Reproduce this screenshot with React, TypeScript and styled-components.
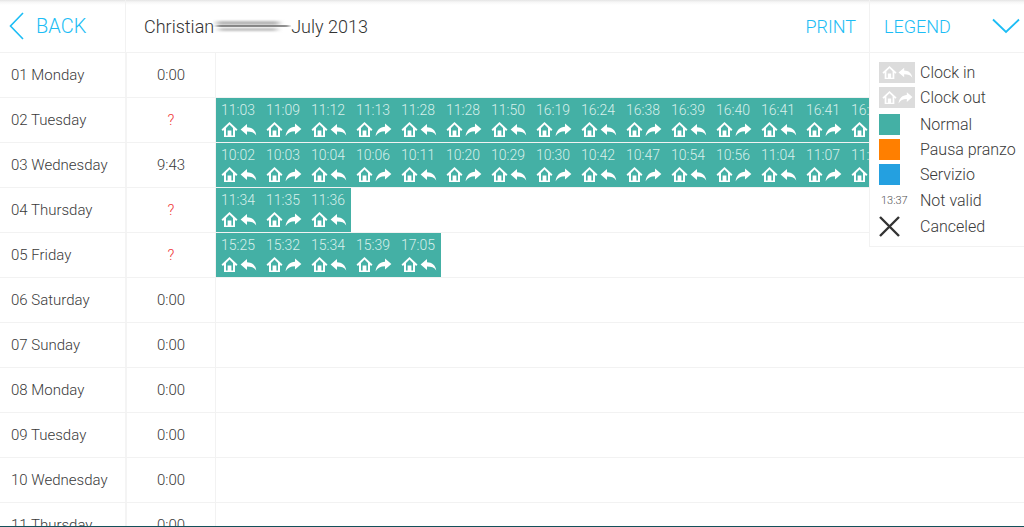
import React from "react";
import styled, { createGlobalStyle } from "styled-components";

const Global = createGlobalStyle`
  html, body { margin: 0; padding: 0; height: 100%; background: #fff; }
  #root { height: 100%; }
  * { box-sizing: border-box; }
`;

const Page = styled.div`
  position: relative;
  width: 100%;
  height: 100vh;
  overflow: hidden;
  display: flex;
  flex-direction: column;
  font-family: Roboto, "Liberation Sans", sans-serif;
  font-weight: 300;
  color: #333;
  border-bottom: 1px solid #14505a;
`;

const Header = styled.header`
  flex: none;
  height: 53px;
  display: flex;
  align-items: stretch;
  border-bottom: 1px solid #f2f2f2;
  background: linear-gradient(#e4e4e4 0, #f6f6f6 2px, #fff 5px);
`;

const BackButton = styled.div`
  flex: none;
  width: 126px;
  display: flex;
  align-items: center;
  padding-left: 9px;
  gap: 12px;
  border-right: 1px solid #f2f2f2;
  color: #1cbdf5;
  font-size: 20px;
`;

const Title = styled.div`
  flex: 1;
  display: flex;
  align-items: center;
  padding-left: 18px;
  font-size: 18px;
  color: #333;
`;

const NameSmear = styled.svg`
  flex: none;
  width: 78px;
  height: 16px;
  margin: 0 0 0 -1px;
`;

const PrintLink = styled.div`
  flex: none;
  width: 100px;
  align-self: center;
  padding-right: 13px;
  text-align: right;
  color: #1cbdf5;
  font-size: 18px;
`;

const LegendToggle = styled.div`
  flex: none;
  width: 155px;
  display: flex;
  align-items: center;
  justify-content: space-between;
  padding: 0 4px 0 14px;
  border-left: 1px solid #f2f2f2;
  color: #1cbdf5;
  font-size: 18px;
`;

const Rows = styled.div`
  flex: 1;
  min-height: 0;
  overflow: hidden;
`;

const Row = styled.div`
  height: 45px;
  display: flex;
  border-bottom: 1px solid #f2f2f2;
`;

const DayCell = styled.div`
  flex: none;
  width: 127px;
  padding-left: 11px;
  display: flex;
  align-items: center;
  font-size: 15px;
  color: #3a3a3a;
  border-right: 2px solid #f4f4f4;
`;

const HoursCell = styled.div<{ $unknown?: boolean }>`
  flex: none;
  width: 89px;
  display: flex;
  align-items: center;
  justify-content: center;
  font-size: 15px;
  color: ${(p) => (p.$unknown ? "#ef3a3a" : "#3a3a3a")};
  border-right: 1px solid #f2f2f2;
`;

const Track = styled.div`
  flex: 1;
  min-width: 0;
  display: flex;
  overflow: hidden;
`;

const Entry = styled.div`
  flex: none;
  width: 45px;
  height: 44px;
  background: #44b0a5;
  padding: 3px 0 0 5px;
  color: #d8efeb;
  font-size: 14px;
  line-height: 18px;
`;

const EntryIcons = styled.div`
  display: flex;
  align-items: center;
  gap: 2px;
  margin-top: 2px;
`;

const LegendPanel = styled.aside`
  position: absolute;
  top: 53px;
  right: 0;
  width: 155px;
  height: 194px;
  padding: 9px 0 0 9px;
  background: #fff;
  border-left: 1px solid #f2f2f2;
  border-bottom: 1px solid #f2f2f2;
`;

const LegendRow = styled.div<{ $h: number }>`
  height: ${(p) => p.$h}px;
  display: flex;
  align-items: center;
  font-size: 16px;
  color: #3a3a3a;
`;

const LegendKey = styled.div`
  flex: none;
  width: 41px;
  display: flex;
  align-items: center;
`;

const IconChip = styled.div`
  width: 36px;
  height: 21px;
  background: #dcdcdc;
  display: flex;
  align-items: center;
  justify-content: center;
  gap: 1px;
`;

const Swatch = styled.div<{ $color: string }>`
  width: 21px;
  height: 21px;
  background: ${(p) => p.$color};
`;

const SmallTime = styled.span`
  font-size: 11px;
  color: #555;
  padding-left: 2px;
`;

const House = ({ size = 17 }: { size?: number }) => (
  <svg width={size} height={size} viewBox="0 0 17 17">
    <path
      d="M8.5 1 L16.5 8.6 L15.2 9.9 L14 8.9 V16 H3 V8.9 L1.8 9.9 L0.5 8.6 Z"
      fill="#fff"
    />
    <path d="M8.5 3.6 L12 7 V14.4 H10.4 V9.6 H6.6 V14.4 H5 V7 Z" fill="#44b0a5" fillOpacity="1" className="hole" />
  </svg>
);

const HouseLight = () => (
  <svg width={15} height={15} viewBox="0 0 17 17">
    <path d="M8.5 1 L16.5 8.6 L15.2 9.9 L14 8.9 V16 H3 V8.9 L1.8 9.9 L0.5 8.6 Z" fill="#fff" />
    <path d="M8.5 3.6 L12 7 V14.4 H10.4 V9.6 H6.6 V14.4 H5 V7 Z" fill="#dcdcdc" />
  </svg>
);

const ArrowIn = ({ size = 17 }: { size?: number }) => (
  <svg width={size} height={size} viewBox="0 0 17 17">
    <path d="M7 3 V6.2 C12 6.4 15.6 9 16.2 14.5 C14.4 11.6 11.4 10.6 7 10.6 V14 L0.6 8.5 Z" fill="#fff" />
  </svg>
);

const ArrowOut = ({ size = 17 }: { size?: number }) => (
  <svg width={size} height={size} viewBox="0 0 17 17">
    <path d="M10 2.6 V5.8 C5 6 1.4 9.4 0.6 15.2 C2.6 11.8 5.6 10.2 10 10.2 V13.6 L16.4 8 Z" fill="#fff" />
  </svg>
);

const days: { day: string; hours: string; times?: string[] }[] = [
  { day: "01 Monday", hours: "0:00" },
  {
    day: "02 Tuesday",
    hours: "?",
    times: ["11:03","11:09","11:12","11:13","11:28","11:28","11:50","16:19","16:24","16:38","16:39","16:40","16:41","16:41","16:51"],
  },
  {
    day: "03 Wednesday",
    hours: "9:43",
    times: ["10:02","10:03","10:04","10:06","10:11","10:20","10:29","10:30","10:42","10:47","10:54","10:56","11:04","11:07","11:20"],
  },
  { day: "04 Thursday", hours: "?", times: ["11:34","11:35","11:36"] },
  { day: "05 Friday", hours: "?", times: ["15:25","15:32","15:34","15:39","17:05"] },
  { day: "06 Saturday", hours: "0:00" },
  { day: "07 Sunday", hours: "0:00" },
  { day: "08 Monday", hours: "0:00" },
  { day: "09 Tuesday", hours: "0:00" },
  { day: "10 Wednesday", hours: "0:00" },
  { day: "11 Thursday", hours: "0:00" },
];

export default function App() {
  return (
    <Page>
      <Global />
      <Header>
        <BackButton>
          <svg width="15" height="28" viewBox="0 0 15 28">
            <path d="M14 1 L1.5 14 L14 27" fill="none" stroke="#1cbdf5" strokeWidth="1.6" />
          </svg>
          <span>BACK</span>
        </BackButton>
        <Title>
          <span>Christian</span>
          <NameSmear viewBox="0 0 78 16">
            <defs>
              <filter id="smear" x="-10%" y="-60%" width="120%" height="220%">
                <feGaussianBlur stdDeviation="3 0.9" />
              </filter>
              <filter id="smearFine" x="-10%" y="-60%" width="120%" height="220%">
                <feGaussianBlur stdDeviation="2 0.4" />
              </filter>
            </defs>
            <rect x="4" y="3" width="62" height="4" fill="#b5b5b5" filter="url(#smear)" />
            <rect x="6" y="10" width="58" height="3" fill="#bdbdbd" filter="url(#smear)" />
            <rect x="4" y="7.4" width="72" height="1.2" fill="#444" filter="url(#smearFine)" />
          </NameSmear>
          <span>July 2013</span>
        </Title>
        <PrintLink>PRINT</PrintLink>
        <LegendToggle>
          <span>LEGEND</span>
          <svg width="28" height="16" viewBox="0 0 28 16">
            <path d="M1 1.5 L14 14 L27 1.5" fill="none" stroke="#1cbdf5" strokeWidth="1.8" />
          </svg>
        </LegendToggle>
      </Header>
      <Rows>
        {days.map((d) => (
          <Row key={d.day}>
            <DayCell>{d.day}</DayCell>
            <HoursCell $unknown={d.hours === "?"}>{d.hours}</HoursCell>
            <Track>
              {d.times?.map((t, i) => (
                <Entry key={i}>
                  {t}
                  <EntryIcons>
                    <House />
                    {i % 2 === 0 ? <ArrowIn /> : <ArrowOut />}
                  </EntryIcons>
                </Entry>
              ))}
            </Track>
          </Row>
        ))}
      </Rows>
      <LegendPanel>
        <LegendRow $h={21}>
          <LegendKey>
            <IconChip><HouseLight /><ArrowIn size={15} /></IconChip>
          </LegendKey>
          Clock in
        </LegendRow>
        <LegendRow $h={29}>
          <LegendKey>
            <IconChip><HouseLight /><ArrowOut size={15} /></IconChip>
          </LegendKey>
          Clock out
        </LegendRow>
        <LegendRow $h={25}>
          <LegendKey><Swatch $color="#44b0a5" /></LegendKey>
          Normal
        </LegendRow>
        <LegendRow $h={25}>
          <LegendKey><Swatch $color="#ff7f00" /></LegendKey>
          Pausa pranzo
        </LegendRow>
        <LegendRow $h={25}>
          <LegendKey><Swatch $color="#24a0e0" /></LegendKey>
          Servizio
        </LegendRow>
        <LegendRow $h={27}>
          <LegendKey><SmallTime>13:37</SmallTime></LegendKey>
          Not valid
        </LegendRow>
        <LegendRow $h={25}>
          <LegendKey>
            <svg width="21" height="21" viewBox="0 0 21 21">
              <path d="M1 1 L20 20 M20 1 L1 20" stroke="#333" strokeWidth="2.4" />
            </svg>
          </LegendKey>
          Canceled
        </LegendRow>
      </LegendPanel>
    </Page>
  );
}
